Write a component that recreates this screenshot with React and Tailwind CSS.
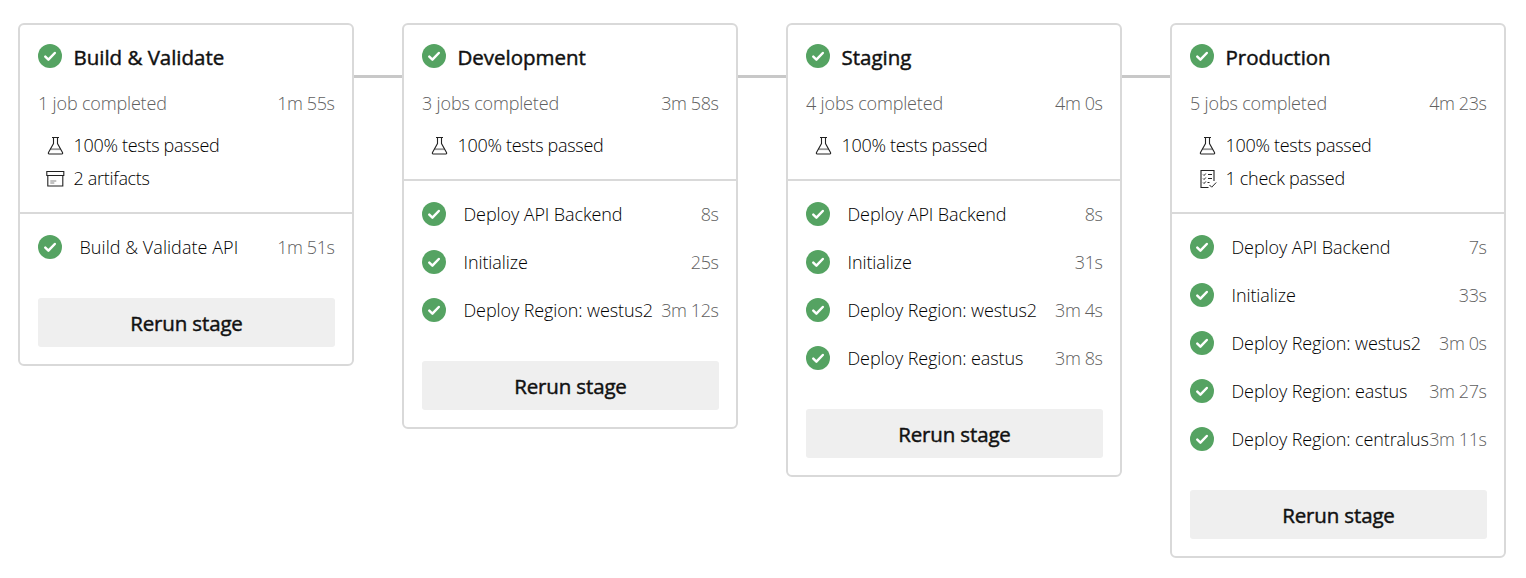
import React from "react";

const TESTS = { icon: "flask", text: "100% tests passed" };

const STAGES = [
  {
    name: "Build & Validate",
    jobsText: "1 job completed",
    time: "1m 55s",
    facts: [TESTS, { icon: "box", text: "2 artifacts" }],
    jobs: [["Build & Validate API", "1m 51s"]],
    jobTracking: "tracking-[0.05px]",
  },
  {
    name: "Development",
    jobsText: "3 jobs completed",
    time: "3m 58s",
    facts: [TESTS],
    jobs: [
      ["Deploy API Backend", "8s"],
      ["Initialize", "25s"],
      ["Deploy Region: westus2", "3m 12s"],
    ],
  },
  {
    name: "Staging",
    jobsText: "4 jobs completed",
    time: "4m 0s",
    facts: [TESTS],
    jobs: [
      ["Deploy API Backend", "8s"],
      ["Initialize", "31s"],
      ["Deploy Region: westus2", "3m 4s"],
      ["Deploy Region: eastus", "3m 8s"],
    ],
  },
  {
    name: "Production",
    jobsText: "5 jobs completed",
    time: "4m 23s",
    facts: [TESTS, { icon: "checklist", text: "1 check passed" }],
    jobs: [
      ["Deploy API Backend", "7s"],
      ["Initialize", "33s"],
      ["Deploy Region: westus2", "3m 0s"],
      ["Deploy Region: eastus", "3m 27s"],
      ["Deploy Region: centralus", "3m 11s"],
    ],
  },
];

function Success() {
  return (
    <svg className="size-6 shrink-0" viewBox="0 0 24 24" fill="none">
      <circle cx="12" cy="12" r="12" fill="#55a362" />
      <path d="M7.3 12.7l3.1 2.9 6.4-6.6" stroke="#fff" strokeWidth="2.5" strokeLinecap="round" strokeLinejoin="round" />
    </svg>
  );
}

function FactIcon({ name }) {
  return (
    <svg className="h-5 w-5 shrink-0" viewBox="0 0 20 20" fill="none" stroke="#222" strokeWidth="1.1">
      {name === "flask" && (
        <>
          <path d="M4.500 13.200h10" stroke="#999" strokeWidth="1.800" />
          <path d="M6 1.500h7M7.500 1.500v6L2.500 16.500c-.4.800-.1 1.500.6 1.500h12.800c.7 0 1-.7.6-1.500L11.500 7.500v-6" />
        </>
      )}
      {name === "box" && (
        <>
          <path d="M.8 2.500h17v4h-17zM1.800 6.500v10.500h15v-10.500" />
          <path d="M4.300 12h6M4.300 14h4" stroke="#888" />
        </>
      )}
      {name === "checklist" && (
        <>
          <path d="M16 12v-10.500h-13v17h7.500" />
          <path d="M10 5.500h4M10 9.500h4M9.500 13.500h2M5.100 5.500l1 1 1.700-2M5.100 9.500l1 1 1.700-2M5.100 13.500l1 1 1.700-2M11.500 16l2.200 2.200 4.500-4.700" strokeWidth="1" />
        </>
      )}
    </svg>
  );
}

function Stage({ stage }) {
  return (
    <section className="w-[336px] shrink-0 rounded-[6px] border-2 border-[#d9d9d9] bg-white">
      <header className="flex flex-col border-b-2 border-[#d9d9d9] pt-[19px] pr-[17px] pb-[17px] pl-[18px]">
        <div className="flex h-6 items-center gap-[11.500px]">
          <Success />
          <h2 className="mt-[2px] text-[20.500px] leading-6 font-normal tracking-[-0.02px] whitespace-nowrap text-[#111] [-webkit-text-stroke:0.45px_#111]">{stage.name}</h2>
        </div>
        <div className="mt-[23px] mb-[14px] flex h-6 items-center justify-between text-[#606060]">
          <span className="tracking-[-0.17px]">{stage.jobsText}</span>
          <span className="-mr-[0.500px] pr-px tracking-[-0.42px]">{stage.time}</span>
        </div>
        {stage.facts.map((f) => (
          <div key={f.text} className="flex h-[33px] items-center gap-[7.500px] pl-2">
            <FactIcon name={f.icon} />
            <span className="tracking-[-0.3px]">{f.text}</span>
          </div>
        ))}
      </header>
      <div className="pt-[9px] pr-[17px] pb-[17px] pl-[18px]">
        {stage.jobs.map(([name, time]) => (
          <div key={name} className="flex h-12 items-center whitespace-nowrap">
            <Success />
            <span className={`pl-[17.500px] ${stage.jobTracking || "tracking-[-0.1px]"}`}>{name}</span>
            <span className="-mr-[0.500px] ml-auto pr-px tracking-[-0.42px] text-[#606060]">{time}</span>
          </div>
        ))}
        <button className="mt-[27px] flex h-[49px] w-full items-center justify-center rounded-[3px] bg-[#efefef] pt-[2px] text-[20.500px] font-normal tracking-[-0.15px] text-[#111] [-webkit-text-stroke:0.45px_#111]">
          Rerun stage
        </button>
      </div>
    </section>
  );
}

export default function App() {
  return (
    <main className="flex h-[578px] w-[1526px] items-start overflow-hidden bg-white pt-[23px] pl-[18px] font-['Open_Sans','Noto_Sans',sans-serif] text-[18px] font-light text-black">
      {STAGES.map((s, i) => (
        <React.Fragment key={s.name}>
          {i > 0 && <div className="mt-[52px] h-[3px] w-12 shrink-0 bg-[#c8c8c8]" />}
          <Stage stage={s} />
        </React.Fragment>
      ))}
    </main>
  );
}
